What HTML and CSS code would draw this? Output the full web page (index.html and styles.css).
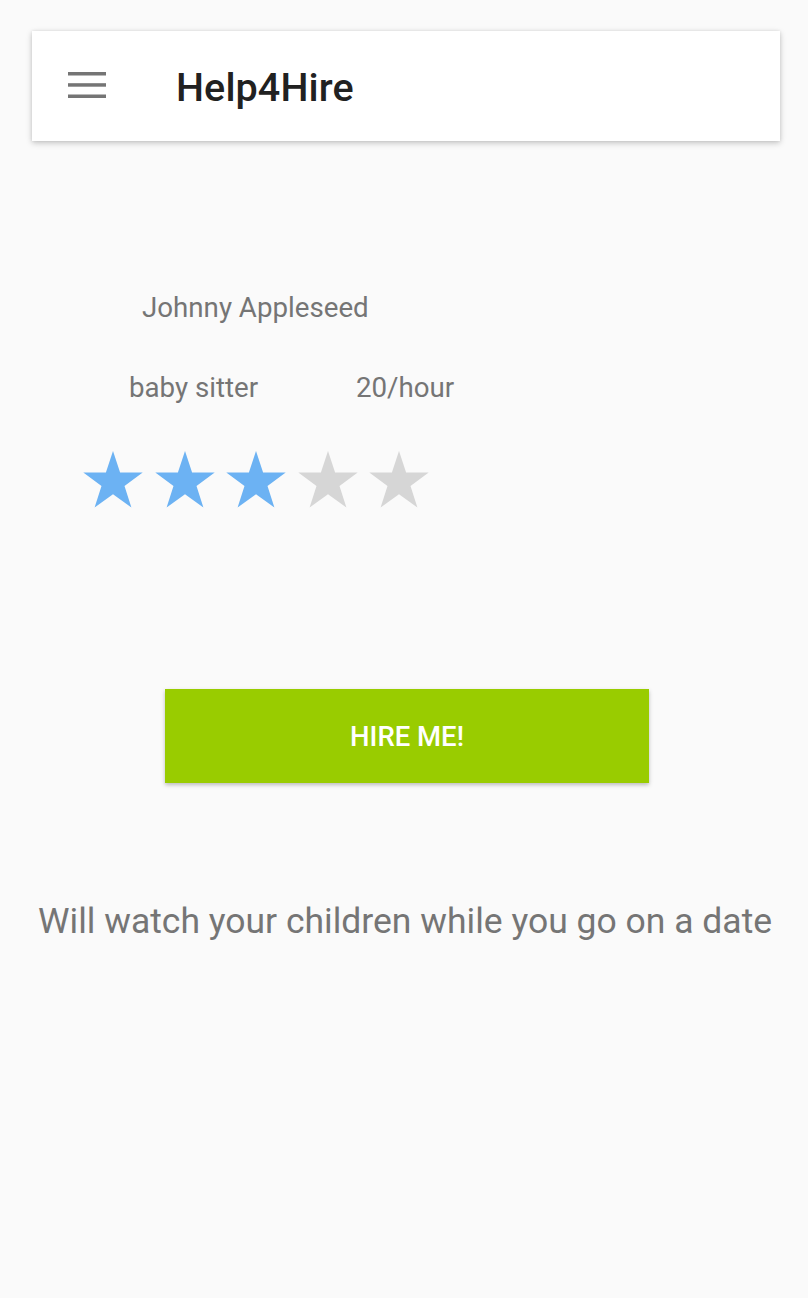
FILE: index.html
```html
<!DOCTYPE html>
<html>
<head>
<meta charset="utf-8">
<link rel="stylesheet" href="styles.css">
</head>
<body>
<div class="page">
  <header class="toolbar">
    <svg class="menu" viewBox="0 0 38 26" width="38" height="26">
      <rect x="0" y="0" width="38" height="3.5" fill="#757575"/>
      <rect x="0" y="11.2" width="38" height="3.5" fill="#757575"/>
      <rect x="0" y="22.5" width="38" height="3.5" fill="#757575"/>
    </svg>
    <h1 class="title">Help4Hire</h1>
  </header>
  <section class="profile">
    <div class="name">Johnny Appleseed</div>
    <div class="meta">
      <span class="job">baby sitter</span>
      <span class="rate">20/hour</span>
    </div>
    <div class="stars">
      <svg class="star on" viewBox="0 0 60 58"><polygon points="30,0 37.1,21.5 59.7,21.6 41.5,35 48.4,56.6 30,43.3 11.6,56.6 18.5,35 0.3,21.6 22.9,21.5"/></svg>
      <svg class="star on" viewBox="0 0 60 58"><polygon points="30,0 37.1,21.5 59.7,21.6 41.5,35 48.4,56.6 30,43.3 11.6,56.6 18.5,35 0.3,21.6 22.9,21.5"/></svg>
      <svg class="star on" viewBox="0 0 60 58"><polygon points="30,0 37.1,21.5 59.7,21.6 41.5,35 48.4,56.6 30,43.3 11.6,56.6 18.5,35 0.3,21.6 22.9,21.5"/></svg>
      <svg class="star off" viewBox="0 0 60 58"><polygon points="30,0 37.1,21.5 59.7,21.6 41.5,35 48.4,56.6 30,43.3 11.6,56.6 18.5,35 0.3,21.6 22.9,21.5"/></svg>
      <svg class="star off" viewBox="0 0 60 58"><polygon points="30,0 37.1,21.5 59.7,21.6 41.5,35 48.4,56.6 30,43.3 11.6,56.6 18.5,35 0.3,21.6 22.9,21.5"/></svg>
    </div>
  </section>
  <div class="action">
    <button class="hire">HIRE ME!</button>
  </div>
  <p class="desc">Will watch your children while you go on a date</p>
</div>
</body>
</html>
```

FILE: styles.css
```css
html, body {
  margin: 0;
  padding: 0;
  background: #fafafa;
  font-family: Roboto, "Liberation Sans", sans-serif;
}
.page {
  width: 808px;
  height: 1298px;
  padding-top: 31px;
  box-sizing: border-box;
}
.toolbar {
  margin: 0 28px 0 32px;
  height: 110px;
  background: #fff;
  box-shadow: 0 2px 6px rgba(0,0,0,0.22), 0 0 3px rgba(0,0,0,0.08);
  display: flex;
  align-items: center;
  padding-left: 36px;
}
.menu {
  display: block;
  margin-top: -2px;
}
.title {
  margin: 3px 0 0 70px;
  font-family: Roboto, sans-serif;
  font-weight: 500;
  font-size: 39.5px;
  color: #212121;
  letter-spacing: 0.1px;
}
.profile {
  padding-top: 152px;
}
.name {
  margin-left: 142px;
  font-size: 27.7px;
  color: #757575;
  line-height: 30px;
}
.meta {
  margin-top: 50px;
  display: flex;
  font-size: 27.7px;
  color: #757575;
  line-height: 30px;
}
.job {
  margin-left: 129px;
  width: 227px;
}
.stars {
  margin-top: 48px;
  margin-left: 83px;
  display: flex;
  gap: 11.5px;
}
.star {
  width: 60px;
  height: 58px;
  display: block;
}
.star.on { fill: #6cb2f3; }
.star.off { fill: #d6d6d6; }
.action {
  margin-top: 180px;
  display: flex;
  padding-left: 165px;
}
.hire {
  width: 484px;
  height: 94px;
  border: none;
  background: #99cc00;
  color: #fff;
  font-family: Roboto, sans-serif;
  font-weight: 500;
  font-size: 27.5px;
  box-shadow: 0 2px 4px rgba(0,0,0,0.25);
  padding: 0;
}
.desc {
  margin: 118px 0 0 38px;
  font-size: 35.5px;
  color: #757575;
  line-height: 40px;
  white-space: nowrap;
}
```
